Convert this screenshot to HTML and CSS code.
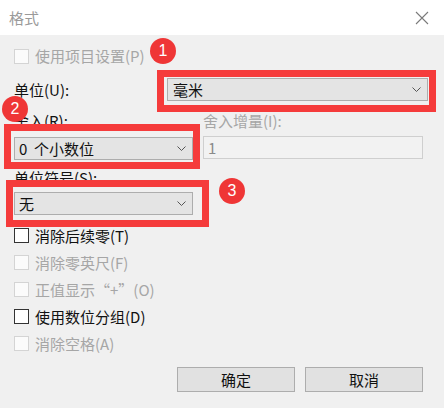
FILE: index.html
```html
<!DOCTYPE html>
<html lang="zh-CN">
<head>
<meta charset="utf-8">
<title>格式</title>
<link rel="stylesheet" href="styles.css">
</head>
<body>
<div class="dialog">
  <div class="titlebar">
    <span class="title">格式</span>
    <svg class="close" width="14" height="14" viewBox="0 0 14 14"><path d="M1 1L13 13M13 1L1 13" stroke="#7a7a7a" stroke-width="1.1" fill="none"/></svg>
  </div>
  <div class="content">
    <div class="check disabled first"><span class="box"></span><span>使用项目设置(P)</span></div>
    <div class="unit-row">
      <span class="label">单位(U):</span>
      <div class="combo wide"><span>毫米</span><svg class="chev" width="9" height="5" viewBox="0 0 9 5"><path d="M0.5 0.5L4.5 4.5L8.5 0.5" stroke="#555" fill="none"/></svg></div>
    </div>
    <div class="round-row">
      <div class="col">
        <span class="label">舍入(R):</span>
        <div class="combo narrow"><span>0&nbsp;&nbsp;个小数位</span><svg class="chev" width="9" height="5" viewBox="0 0 9 5"><path d="M0.5 0.5L4.5 4.5L8.5 0.5" stroke="#555" fill="none"/></svg></div>
      </div>
      <div class="col">
        <span class="label muted">舍入增量(I):</span>
        <div class="input">1</div>
      </div>
    </div>
    <span class="label sym">单位符号(S):</span>
    <div class="combo narrow sym-combo"><span>无</span><svg class="chev" width="9" height="5" viewBox="0 0 9 5"><path d="M0.5 0.5L4.5 4.5L8.5 0.5" stroke="#555" fill="none"/></svg></div>
    <div class="checks">
      <div class="check"><span class="box"></span><span>消除后续零(T)</span></div>
      <div class="check disabled"><span class="box"></span><span>消除零英尺(F)</span></div>
      <div class="check disabled"><span class="box"></span><span>正值显示“+”(O)</span></div>
      <div class="check"><span class="box"></span><span>使用数位分组(D)</span></div>
      <div class="check disabled"><span class="box"></span><span>消除空格(A)</span></div>
    </div>
    <div class="buttons">
      <div class="btn">确定</div>
      <div class="btn">取消</div>
    </div>
  </div>
  <div class="mark mark1"></div>
  <div class="mark mark2"></div>
  <div class="mark mark3"></div>
  <div class="badge badge1">1</div>
  <div class="badge badge2">2</div>
  <div class="badge badge3">3</div>
</div>
</body>
</html>
```
FILE: styles.css
```css
* { box-sizing: border-box; }
html, body { margin: 0; padding: 0; }
body {
  width: 444px;
  height: 408px;
  background: #f0f0f0;
  font-family: "Noto Sans CJK SC", "Noto Sans", sans-serif;
  font-size: 15px;
  color: #111;
  overflow: hidden;
}
.dialog { position: relative; width: 444px; height: 408px; }
.titlebar {
  height: 35px;
  background: #ffffff;
  display: flex;
  align-items: center;
  justify-content: space-between;
  padding: 0 15px 0 9px;
}
.title { color: #9a9a9a; font-size: 15px; line-height: 20px; }
.close { display: block; }
.content { padding: 11px 21px 0 14px; }
.label { line-height: 20px; display: block; }
.muted { color: #a6a6a6; }
.check {
  display: flex;
  align-items: center;
  height: 27px;
  line-height: 20px;
}
.check.first { height: 20px; }
.check .box {
  width: 15px;
  height: 15px;
  border: 1px solid #333;
  background: #fff;
  margin-right: 6px;
  flex: none;
}
.check.disabled { color: #a6a6a6; }
.check.disabled .box { border-color: #d4d4d4; background: #fbfbfb; }
.unit-row {
  margin-top: 12px;
  display: flex;
  align-items: center;
  justify-content: space-between;
}
.combo {
  height: 23px;
  border: 1px solid #adadad;
  background: #e4e4e4;
  display: flex;
  align-items: center;
  justify-content: space-between;
  padding: 0 6px 0 5px;
  line-height: 20px;
}
.combo.wide { width: 261px; margin-right: -5px; }
.combo.narrow { width: 179px; padding-left: 4px; }
.chev { display: block; }
.round-row {
  margin-top: 10px;
  display: flex;
  gap: 10px;
}
.round-row .col { display: flex; flex-direction: column; }
.round-row .col .combo { margin-top: 6px; }
.input {
  margin-top: 5px;
  width: 220px;
  height: 23px;
  border: 1px solid #cfcfcf;
  background: #f2f2f2;
  color: #8a8a8a;
  padding-left: 4px;
  line-height: 21px;
}
.label.sym { margin-top: 8px; }
.sym-combo { margin-top: 4px; }
.checks { margin-top: 7px; }
.buttons {
  margin-top: 10px;
  display: flex;
  justify-content: flex-end;
  gap: 10px;
}
.btn {
  width: 118px;
  height: 25px;
  border: 1px solid #adadad;
  background: #e1e1e1;
  text-align: center;
  line-height: 23px;
}
.mark {
  position: absolute;
  border: 7px solid #f53b3b;
}
.mark1 { left: 157px; top: 70px; width: 279px; height: 42px; }
.mark2 { left: 4px; top: 124px; width: 196px; height: 45px; }
.mark3 { left: 6px; top: 180px; width: 203px; height: 47px; }
.badge {
  position: absolute;
  width: 26px;
  height: 26px;
  border-radius: 50%;
  background: #ef3636;
  color: #fff;
  font-family: "Liberation Sans", Arial, sans-serif;
  font-size: 16px;
  line-height: 26px;
  text-align: center;
}
.badge1 { left: 150px; top: 38px; }
.badge2 { left: 2px; top: 96px; }
.badge3 { left: 219px; top: 178px; }
```
